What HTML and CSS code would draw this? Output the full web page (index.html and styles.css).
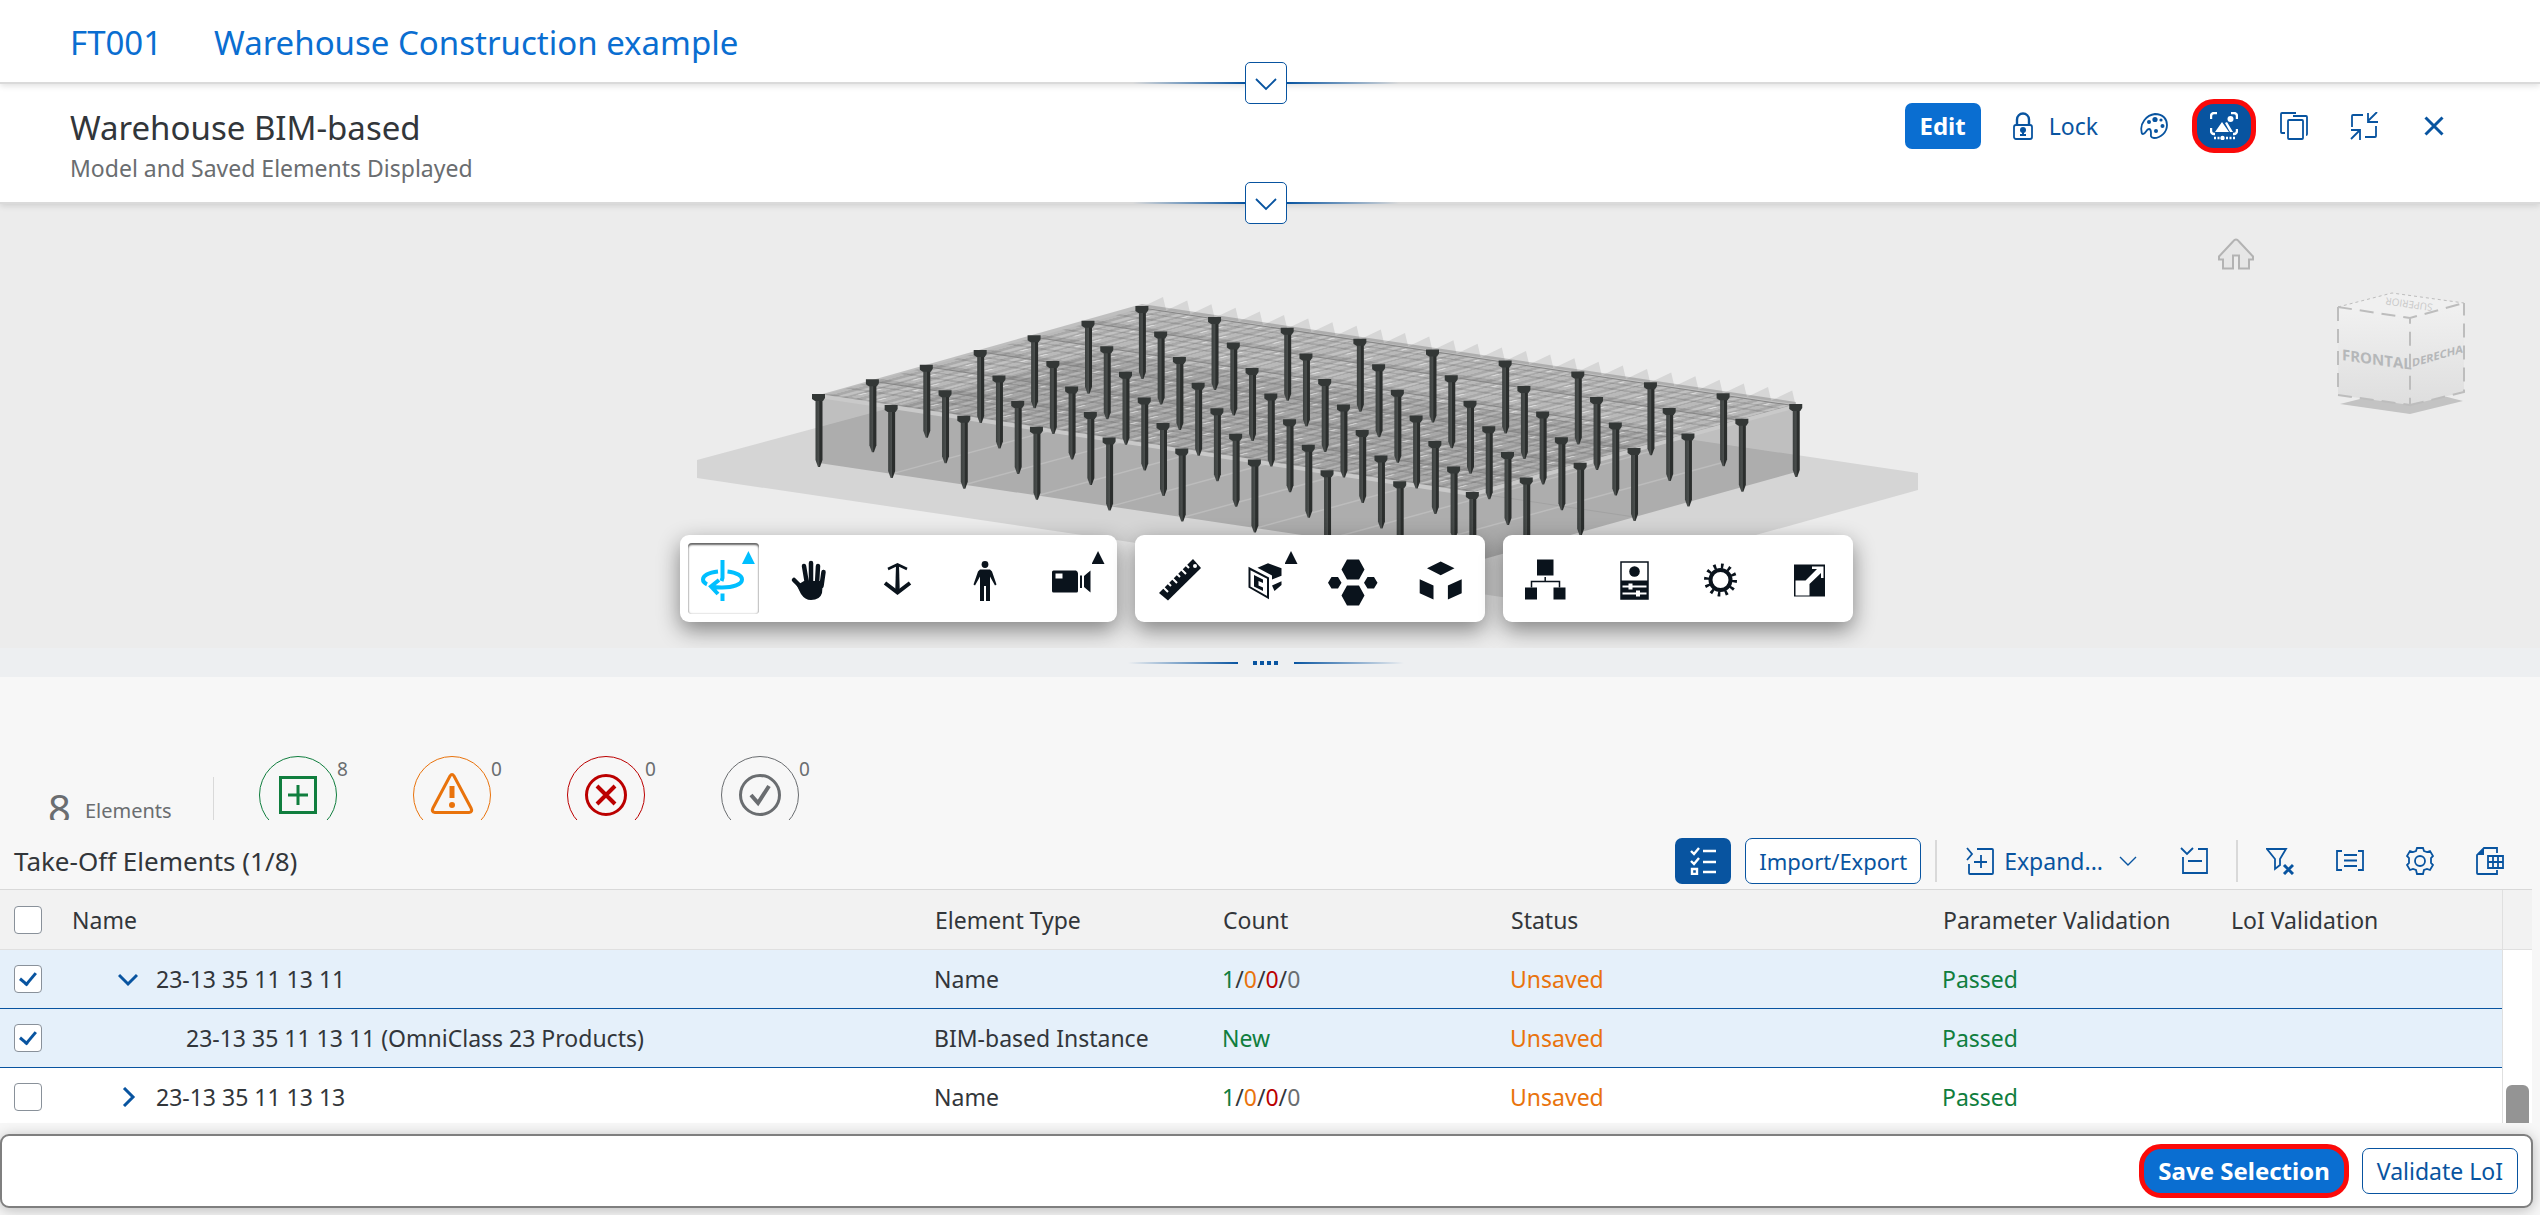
FILE: index.html
```html
<!DOCTYPE html>
<html lang="en">
<head>
<meta charset="utf-8">
<title>Warehouse Construction example</title>
<link rel="stylesheet" href="styles.css">
</head>
<body>
<div class="page">

<header class="project-bar">
  <a class="project-link" href="#project">FT001</a>
  <a class="project-link" href="#project-details">Warehouse Construction example</a>
  <div class="expander">
    <span class="expander-line"></span>
    <button class="expander-button" type="button" aria-label="Expand project header"><svg class="icon-m" viewBox="0 0 28 28"><path class="line" d="M4 10l10 10 10-10"/></svg></button>
    <span class="expander-line expander-line-end"></span>
  </div>
</header>

<section class="model-bar">
  <div class="model-titles">
    <h1 class="model-title">Warehouse BIM-based</h1>
    <p class="model-subtitle">Model and Saved Elements Displayed</p>
  </div>
  <div class="actions">
    <button class="button button-primary" type="button">Edit</button>
    <button class="button button-ghost button-lock" type="button">
      <svg class="icon-lock" viewBox="0 0 20 28"><path class="line thick" d="M4 13V7.500a6 6 0 0 1 12 0V13"/><rect class="line" x="1" y="13" width="18" height="14" rx="2"/><circle class="solid" cx="10" cy="18" r="3"/><path class="solid" d="M9 19h2v3h2v2H7v-2h2z"/></svg>
      Lock</button>
    <button class="button button-icon" type="button" aria-label="Colors"><svg class="icon-m" viewBox="0 0 28 28"><path class="line" d="M1.500 19C0 12 6 3 15 2c8 0 12 5 12 11 0 7-6 13-13 13-4 0-3-3-3-5s0-4-2-4c-3 0-3 5-6 5-1 0-1.500-1-1.500-3z"/><circle class="solid" cx="9" cy="10" r="2"/><circle class="solid" cx="15" cy="7.500" r="2.600"/><circle class="solid" cx="21" cy="8" r="1.600"/><circle class="solid" cx="22.500" cy="14" r="2"/><circle class="solid" cx="16" cy="19" r="2"/></svg></button>
    <button class="button button-icon button-selected marked" type="button" aria-label="Highlight elements"><svg class="icon-m" viewBox="0 0 28 28"><path class="line thick" d="M1 7V4a3 3 0 0 1 3-3h3M21 1h3a3 3 0 0 1 3 3v3M1 16v3a3 3 0 0 0 3 3h1M27 17v2a3 3 0 0 1-3 3h-1"/><path class="solid" d="M5 20l7-10 7 10zM15 11l2-1 6 10h-3z"/><circle class="solid" cx="20.500" cy="7" r="3"/><circle class="solid" cx="12.500" cy="26" r="2.200"/><path class="line thick" stroke-dasharray="2 1.500" d="M4 26h6M16 26h9"/></svg></button>
    <button class="button button-icon" type="button" aria-label="Copy"><svg class="icon-m" viewBox="0 0 28 28"><path class="line" d="M5 21H2a1 1 0 0 1-1-1V2a1 1 0 0 1 1-1h14M13 4h13a1 1 0 0 1 1 1v17a1 1 0 0 1-1 1"/><rect class="line" x="8" y="8" width="15" height="19" rx="1"/></svg></button>
    <button class="button button-icon" type="button" aria-label="Exit full screen"><svg class="icon-m" viewBox="0 0 28 28"><path class="line" d="M2 15V4a1 1 0 0 1 1-1h10M26 14v10a1 1 0 0 1-1 1H15M27 0l-9 9M18 1v9h10M1 27l9-9M1 18h9v10"/></svg></button>
    <button class="button button-icon" type="button" aria-label="Close"><svg class="icon-m" viewBox="0 0 28 28"><path class="line heavy" d="M5.500 5.500l17 17M22.500 5.500l-17 17"/></svg></button>
  </div>
  <div class="expander">
    <span class="expander-line"></span>
    <button class="expander-button" type="button" aria-label="Expand model header"><svg class="icon-m" viewBox="0 0 28 28"><path class="line" d="M4 10l10 10 10-10"/></svg></button>
    <span class="expander-line expander-line-end"></span>
  </div>
</section>

<main class="viewer">
  <svg class="scene" viewBox="592 280 1348 345" role="img" aria-label="Warehouse model">
    <defs>
      <linearGradient id="steel"><stop offset="0" stop-color="#3b3f3e"/><stop offset=".5" stop-color="#4b4f4e"/><stop offset=".6" stop-color="#2b2e2d"/><stop offset="1" stop-color="#2b2e2d"/></linearGradient>
      <g id="column"><path fill="url(#steel)" d="M-3.500 2h7v64l-2.500 7h-2l-2.500-7z"/><path fill="#333736" d="M-7 0h13v4l-2 3h-8l-3-2z"/></g>
      <g id="bay">
        <use href="#column" x="0" y="0"/><use href="#column" x="72.650" y="10.900"/><use href="#column" x="145.300" y="21.800"/><use href="#column" x="217.950" y="32.700"/><use href="#column" x="290.600" y="43.600"/><use href="#column" x="363.250" y="54.500"/><use href="#column" x="435.900" y="65.400"/><use href="#column" x="508.550" y="76.300"/><use href="#column" x="581.200" y="87.200"/><use href="#column" x="653.850" y="98.100"/>
      </g>
      <pattern id="sheet" width="1" height="1" patternUnits="userSpaceOnUse">
        <rect width="1" height="1" fill="#000" fill-opacity=".03"/>
        <path fill="#000" fill-opacity=".09" d="M0 .08h1v.08H0zM0 .26h1v.05H0zM0 .42h1v.08H0zM0 .6h1v.05H0zM0 .76h1v.08H0zM0 .92h1v.04H0z"/>
        <path fill="#fff" fill-opacity=".13" d="M0 .18h1v.06H0zM0 .52h1v.06H0zM0 .86h1v.05H0z"/>
        <path fill="#000" fill-opacity=".1" d="M0 0h.16v1H0zM.5 0h.08v1H.5zM.76 0h.06v1h-.06z"/>
        <path fill="#fff" fill-opacity=".45" d="M.3 .3h.14v.04H.3zM.62 .3h.1v.04h-.1zM.2 .64h.14v.04H.2zM.84 .66h.1v.04h-.1z"/>
      </pattern>
    </defs>
    <path fill="#d5d5d5" d="M697 460L1098 352 1918 473v17L1522 600 697 478z"/>
    <path fill="#d6d6d6" d="M1142 307l21-10 3.200 13.600 21-10 3.200 13.600 21-10 3.200 13.600 21-10 3.200 13.600 21-10 3.200 13.600 21-10 3.200 13.600 21-10 3.200 13.600 21-10 3.200 13.600 21-10 3.200 13.600 21-10 3.200 13.600 21-10 3.200 13.600 21-10 3.200 13.600 21-10 3.200 13.600 21-10 3.200 13.600 21-10 3.200 13.600 21-10 3.200 13.600 21-10 3.200 13.600 21-10 3.200 13.600 21-10 3.200 13.600 21-10 3.200 13.600 21-10 3.200 13.600 21-10 3.200 13.600 21-10 3.200 13.600 21-10 3.200 13.600 21-10 3.200 13.600 21-10 3.200 13.600 21-10 3.200 13.600z"/>
    <path fill-opacity=".19" d="M819 395L1142 304 1796 402v70L1477 561 819 463z"/>
    <g class="floor-lines" transform="matrix(53.900 -14.670 72.650 10.900 819 463)"><path d="M0 1h6M0 2h6M0 3h6M0 4h6M0 5h6M0 6h6M0 7h6M0 8h6"/></g>
    <g class="wall-lines" transform="matrix(53.900 -14.670 72.650 10.900 819 463)"><path d="M3 0v9"/></g>
    <g transform="matrix(53.900 -14.670 72.650 10.900 819 396)"><rect width="6" height="9" fill="url(#sheet)"/><path class="eave" d="M6 9H0V0"/><path class="ridge" d="M6 0v9M5 0v9M4 0v9M3 0v9M2 0v9M1 0v9"/></g>
    <use href="#bay" x="1142.400" y="306"/><use href="#bay" x="1088.500" y="320.700"/><use href="#bay" x="1034.600" y="335.300"/><use href="#bay" x="980.700" y="350"/><use href="#bay" x="926.800" y="364.700"/><use href="#bay" x="872.900" y="379.300"/><use href="#bay" x="819" y="394"/>
  </svg>

  <svg class="view-cube" viewBox="2210 230 260 190" role="img" aria-label="View cube">
    <defs><linearGradient id="face" x1="0" y1="0" x2="0" y2="1"><stop offset="0" stop-color="#f1f1f1"/><stop offset="1" stop-color="#dedede"/></linearGradient></defs>
    <path class="home" d="M2236 239.500q-1.500 0-3 2l-14 15v3h4v9h10v-13h6v13h10v-9h4v-3l-14-15q-1.500-2-3-2z"/>
    <path fill="#c3c3c3" d="M2340 404l70 10 53-13-55-14z"/>
    <path fill="url(#face)" d="M2338 307l72 11v87l-72-10z"/>
    <path fill="url(#face)" d="M2410 318l54-15v89l-54 13z"/>
    <path fill="#f0f0f0" d="M2338 307l54-14 72 10-54 15z"/>
    <path class="cube-edge" d="M2338 307l72 11 54-15M2338 307v88l72 10v-87M2410 405l54-13v-89"/>
    <path class="cube-edge cube-edge-back" d="M2338 307l54-14 72 10"/>
    <text class="cube-text" font-size="15" transform="translate(2342 360) skewY(8)">FRONTAL</text>
    <text class="cube-text" font-size="11" transform="translate(2412 367) skewY(-16)">DERECHA</text>
    <text class="cube-text cube-text-top" font-size="10" transform="translate(2433 304) rotate(188)">SUPERIOR</text>
  </svg>

  <div class="viewer-tools">
    <div class="tool-group">
      <button class="tool tool-active" type="button" aria-label="Orbit"><svg class="icon-l" viewBox="0 0 48 48"><path fill="none" stroke="currentColor" stroke-width="4" d="M19 16.500C9 17.500 4 21 4 24.500c0 2 1 3.500 4 4.800M28.500 16.500C38 17.500 43 21 43 24.500c0 5-9 8-20 8-4 0-8-.4-11-1M20 25l-8 6.500 7 7.500M23.500 5v18l-1 3M23.500 46v-7.500"/></svg><span class="tool-more"></span></button>
      <button class="tool" type="button" aria-label="Pan"><svg class="icon-l" viewBox="0 0 48 48"><path fill="none" stroke="currentColor" stroke-width="4.500" stroke-linecap="round" d="M7 25l9 9M17 11l3 18M24 8v20M31 11l-1 18M36.500 17l-2 14"/><path fill="currentColor" d="M12 29l5-3h19l-1 12q-2 7-11 7-6 0-10-6l-5-10z"/></svg></button>
      <button class="tool" type="button" aria-label="Zoom"><svg class="icon-l" viewBox="0 0 48 48"><path fill="none" stroke="currentColor" stroke-width="2.500" d="M14 14l9.500-4.500L33 14"/><path fill="none" stroke="currentColor" stroke-width="4" d="M11 28l12.500 9.500L36 28"/><path fill="currentColor" d="M22 10h3l.8 28h-4.600z"/></svg></button>
      <button class="tool" type="button" aria-label="First person"><svg class="icon-l" viewBox="0 0 48 48"><circle cx="24" cy="9.500" r="3.400" fill="currentColor"/><path fill="currentColor" d="M19 14.500h10l2 2 4.500 13-1.500 1-5-9v24.500h-4V31h-2v15h-4V21.500l-5 9-1.500-1 4.500-13z"/></svg></button>
      <button class="tool" type="button" aria-label="Camera"><svg class="icon-l" viewBox="0 0 48 48"><path fill="currentColor" fill-rule="evenodd" d="M3 17q0-1.500 1.500-1.500H27q2 1 2 3V36q0 1.500-1.500 1.500h-23Q3 37.500 3 36zM6.500 18.500v5h7v-5zM31 20.500h2v12.500h-2zM35 21l6.500-5.500v22L35 32z"/></svg><span class="tool-more"></span></button>
    </div>
    <div class="tool-group">
      <button class="tool" type="button" aria-label="Measure"><svg class="icon-l" viewBox="0 0 48 48"><path fill="currentColor" d="M5 38L39 4l8 9-33 32.500z"/><path stroke="#fff" stroke-width="2" d="M9 32l5 5M14 28l3 3M18 23l5 5M23 19l3 3M27 14l5 5M32 10l3 3"/><circle cx="41" cy="11" r="2" fill="#fff"/></svg></button>
      <button class="tool" type="button" aria-label="Section"><svg class="icon-l" viewBox="0 0 48 48"><path fill="none" stroke="currentColor" stroke-width="2" d="M7.500 13.500L26 23v19.500L7.500 32z"/><path fill="currentColor" d="M12 20l9 4.500V28l-4.500-2v4.500l4.500 2V36l-9-4.500zM15.500 12.800L26 8.200l13.500 5v7.500L30 24.500v-4zM30 30.500l9.500-4.300v3.800L32.500 36z"/></svg><span class="tool-more"></span></button>
      <button class="tool" type="button" aria-label="Explode"><svg class="icon-l" viewBox="0 0 48 48"><path fill="currentColor" d="M18 4.500h12l5.500 10-5.500 10H18l-5.500-10zM18 30.500h12l5.500 10-5.500 10H18l-5.500-10zM2.500 22H9l3.500 5.800L9 33.500H2.500L-1 27.800zM38.500 22H45l3.500 5.800-3.500 5.700h-6.500L35 27.800z"/></svg></button>
      <button class="tool" type="button" aria-label="Model browser"><svg class="icon-l" viewBox="0 0 48 48"><path fill="currentColor" d="M10 13.200L23.700 6.500 37.500 13.200 23.700 20.200zM2.700 24.200l13.800 6.300v14L2.700 38.200zM44.700 24.200l-13.800 6.300v14l13.800-6.300z"/></svg></button>
    </div>
    <div class="tool-group">
      <button class="tool" type="button" aria-label="Structure"><svg class="icon-l" viewBox="0 0 48 48"><path fill="currentColor" d="M15 4.500h16.500v16H15zM3 32.500h12v12H3zM31.500 32.500h12v12h-12z"/><path fill="none" stroke="currentColor" stroke-width="1.500" d="M23.200 22v4.500M9.500 32.500v-6h28v6"/></svg></button>
      <button class="tool" type="button" aria-label="Properties"><svg class="icon-l" viewBox="0 0 48 48"><path fill="none" stroke="currentColor" stroke-width="1.500" d="M11 7h27v37H11z"/><path fill="currentColor" d="M11 25.500h27V44H11z"/><circle cx="24.500" cy="16.500" r="5.300" fill="currentColor"/><path stroke="#fff" stroke-width="2" d="M12.500 31.500h24M12.500 38.500h24"/><path stroke="#fff" stroke-width="4" d="M20.500 28.500v6M28 35.500v6"/></svg></button>
      <button class="tool" type="button" aria-label="Settings"><svg class="icon-l" viewBox="0 0 48 48"><circle cx="23.500" cy="25" r="10" fill="none" stroke="currentColor" stroke-width="4"/><circle cx="23.500" cy="25" r="14" fill="none" stroke="currentColor" stroke-width="5" stroke-dasharray="2.600 4.730"/></svg></button>
      <button class="tool" type="button" aria-label="Full screen"><svg class="icon-l" viewBox="0 0 48 48"><path fill="currentColor" d="M9 9.500h31v32H9z"/><path fill="#fff" d="M10.500 25.500h10L32 14h-5v-2.500h11.500V23H36v-5L24.500 29v11.500h-14z"/></svg></button>
    </div>
  </div>
</main>

<div class="splitter" role="separator"><span class="splitter-line"></span><span class="splitter-grip"></span><span class="splitter-line splitter-line-end"></span></div>

<section class="summary">
  <div class="summary-total"><span class="summary-number">8</span><span class="summary-label">Elements</span></div>
  <div class="status status-new"><span class="status-ring"><svg class="icon-s" viewBox="0 0 44 44"><path d="M4.500 4.500h35v35h-35zM22 12v20M12 22h20"/></svg></span><span class="status-count">8</span></div>
  <div class="status status-warning"><span class="status-ring"><svg class="icon-s" viewBox="0 0 44 44"><path d="M20 3q2-3 4 0l17 32q2 4-2 4.500H5Q1 39 3 35z"/><path d="M22 13v12" stroke-width="5"/><circle cx="22" cy="32" r="3" fill="currentColor" stroke="none"/></svg></span><span class="status-count">0</span></div>
  <div class="status status-error"><span class="status-ring"><svg class="icon-s" viewBox="0 0 44 44"><circle cx="22" cy="22" r="19.500"/><path stroke-width="4" d="M13 13l18 18M31 13L13 31"/></svg></span><span class="status-count">0</span></div>
  <div class="status status-done"><span class="status-ring"><svg class="icon-s" viewBox="0 0 44 44"><circle cx="22" cy="22" r="19.500"/><path stroke-width="4" d="M13 22l7 8 11-17"/></svg></span><span class="status-count">0</span></div>
</section>

<section class="elements">
  <div class="table-bar">
    <h2 class="table-title">Take-Off Elements (1/8)</h2>
    <div class="actions">
      <button class="button button-icon button-selected" type="button" aria-label="Multi select"><svg class="icon-m" viewBox="0 0 28 28"><path class="line thick" d="M2 4l3 3 5-6M2 14l3 3 5-6M14 4h13M14 15h13M14 25h13M3 22h5v5H3z"/></svg></button>
      <button class="button button-outline button-transfer" type="button">Import/Export</button>
      <span class="bar-divider"></span>
      <button class="button button-ghost button-expand" type="button"><svg class="icon-m" viewBox="0 0 28 28"><path class="line" d="M1 1l5 6-5 6M3 17v9a1 1 0 0 0 1 1h22a1 1 0 0 0 1-1V3a1 1 0 0 0-1-1H11M15 8v13M8 15h13"/></svg>Expand...<svg class="icon-chevron" viewBox="0 0 18 18"><path class="line thin" d="M1 5l8 8 8-8"/></svg></button>
      <button class="button button-icon" type="button" aria-label="Collapse"><svg class="icon-m" viewBox="0 0 28 28"><path class="line" d="M1 1l6 6 6-6M3 10v16h24V2H18M8 14h14"/></svg></button>
      <span class="bar-divider"></span>
      <button class="button button-icon" type="button" aria-label="Clear filter"><svg class="icon-m" viewBox="0 0 28 28"><path class="line" d="M1 2h19l-6 10v6l-5 4V12z"/><path class="line heavy" d="M18 18l9 9M27 18l-9 9"/></svg></button>
      <button class="button button-icon" type="button" aria-label="Group"><svg class="icon-m" viewBox="0 0 28 28"><path class="line" d="M6 4H1v19h5M22 4h5v19h-5M8 8h13M8 13.500h13M8 19h13"/></svg></button>
      <button class="button button-icon" type="button" aria-label="Settings"><svg class="icon-m" viewBox="0 0 28 28"><circle class="line" cx="14" cy="14" r="5"/><path class="line" d="M11 1h6l1 3 3 1 3-1 3 5-2 2v5l2 2-3 5-3-1-3 1-1 4h-6l-1-4-3-1-3 1-3-5 2-2v-5L1 9l3-5 3 1 3-1z"/></svg></button>
      <button class="button button-icon" type="button" aria-label="Export to spreadsheet"><svg class="icon-m" viewBox="0 0 28 28"><path class="line" d="M21 6V1H8L1 8v18a1 1 0 0 0 1 1h19v-4M12 9h15v12H12zM12 15h15M17 9v12M22 9v12"/><path class="solid" d="M8 1v7H1z"/></svg></button>
    </div>
  </div>

  <div class="table-area">
    <table class="table">
      <colgroup><col class="col-check"><col><col class="col-std"><col class="col-std"><col class="col-wide"><col class="col-std"><col class="col-last"></colgroup>
      <thead>
        <tr><th><input class="check" type="checkbox" aria-label="Select all"></th><th>Name</th><th>Element Type</th><th>Count</th><th>Status</th><th>Parameter Validation</th><th>LoI Validation</th></tr>
      </thead>
      <tbody>
        <tr class="selected"><td><input class="check" type="checkbox" aria-label="Select 23-13 35 11 13 11" checked></td>
          <td><span class="node"><button class="node-toggle" type="button" aria-label="Collapse node"><svg class="icon-caret" viewBox="0 0 20 20"><path class="line heavy" d="M1 6l9 9 9-9"/></svg></button>23-13 35 11 13 11</span></td>
          <td>Name</td><td><span class="new">1</span>/<span class="warn">0</span>/<span class="error">0</span>/<span class="muted">0</span></td><td class="warn">Unsaved</td><td class="new">Passed</td><td></td></tr>
        <tr class="selected"><td><input class="check" type="checkbox" aria-label="Select OmniClass 23 Products" checked></td>
          <td><span class="node node-child">23-13 35 11 13 11 (OmniClass 23 Products)</span></td>
          <td>BIM-based Instance</td><td class="new">New</td><td class="warn">Unsaved</td><td class="new">Passed</td><td></td></tr>
        <tr><td><input class="check" type="checkbox" aria-label="Select 23-13 35 11 13 13"></td>
          <td><span class="node"><button class="node-toggle" type="button" aria-label="Expand node"><svg class="icon-caret" viewBox="0 0 20 20"><path class="line heavy" d="M6 1l9 9-9 9"/></svg></button>23-13 35 11 13 13</span></td>
          <td>Name</td><td><span class="new">1</span>/<span class="warn">0</span>/<span class="error">0</span>/<span class="muted">0</span></td><td class="warn">Unsaved</td><td class="new">Passed</td><td></td></tr>
      </tbody>
    </table>
    <div class="scrollbar"><div class="scrollbar-head"></div><div class="scrollbar-track"><div class="scrollbar-thumb"></div></div></div>
  </div>
</section>

<footer class="footer-bar">
  <button class="button button-primary marked" type="button">Save Selection</button>
  <button class="button button-outline" type="button">Validate LoI</button>
</footer>

</div>
</body>
</html>
```
FILE: styles.css
```css
* { box-sizing: border-box; }

body {
  margin: 0;
  background: #f7f7f7;
  color: #32363a;
  font: 23px/32px "Noto Sans", "Open Sans", sans-serif;
}

h1, h2, p { margin: 0; font-weight: 400; }

button { font: inherit; cursor: pointer; }

.page {
  min-height: 100vh;
  display: flex;
  flex-direction: column;
  overflow: hidden;
}

/* Header bars */
.project-bar, .model-bar {
  position: relative;
  display: flex;
  background: #fff;
  border-bottom: 2px solid #dadada;
  box-shadow: 0 2px 6px rgba(0, 0, 0, .12);
}

.project-bar {
  z-index: 3;
  gap: 52px;
  align-items: center;
  height: 84px;
  padding: 4px 70px 0;
}

.project-link {
  color: #0a6ed1;
  font-size: 33px;
  line-height: 40px;
  text-decoration: none;
}

.model-bar {
  z-index: 2;
  justify-content: space-between;
  align-items: flex-start;
  height: 120px;
  padding: 19px 78px 0 70px;
}

.model-title { font-size: 33px; line-height: 49px; }
.model-subtitle { color: #6a6d70; }

.expander {
  position: absolute;
  left: 0;
  right: 8px;
  bottom: -22px;
  height: 42px;
  display: flex;
  justify-content: center;
  align-items: center;
  pointer-events: none;
}

.expander-line {
  width: 112px;
  height: 2px;
  background: linear-gradient(to right, transparent, #0854a0);
}

.expander-line-end { background: linear-gradient(to left, transparent, #0854a0); }

.expander-button {
  width: 42px;
  height: 42px;
  padding: 0;
  display: grid;
  place-items: center;
  color: #0854a0;
  background: #fff;
  border: 1px solid #0854a0;
  border-radius: 5px;
  pointer-events: auto;
}

/* Buttons and icons */
.actions { display: flex; align-items: center; gap: 14px; }

.button {
  height: 46px;
  padding: 0 14px;
  display: flex;
  align-items: center;
  justify-content: center;
  border: 1px solid transparent;
  border-radius: 7px;
  background: transparent;
  color: #0854a0;
  white-space: nowrap;
}

.button-primary { background: #0a6ed1; color: #fff; font-size: 24px; font-weight: 700; }
.button-outline { background: #fff; border-color: #0854a0; }
.button-transfer { padding: 0 13px; font-size: 22px; }
.button-icon { width: 56px; padding: 0; }
.button-selected { background: #0854a0; color: #fff; }
.button-lock { gap: 16px; padding: 0 13px 0 17px; }
.button-expand { gap: 10px; }
.marked { outline: 5px solid #fb0a0a; outline-offset: -1px; border-radius: 18px; }

.icon-m { width: 28px; height: 28px; }
.icon-lock { width: 20px; height: 28px; }
.icon-chevron { width: 18px; height: 18px; margin-left: 6px; }
.icon-caret { width: 20px; height: 20px; }
.icon-l { width: 48px; height: 48px; overflow: visible; }
.icon-s { width: 44px; height: 44px; fill: none; stroke: currentColor; stroke-width: 3; }

.line { fill: none; stroke: currentColor; stroke-width: 1.800; }
.thin { stroke-width: 1.400; }
.thick { stroke-width: 2.400; }
.heavy { stroke-width: 3; }
.solid { fill: currentColor; }

/* 3D viewer */
.viewer {
  position: relative;
  height: 444px;
  padding: 76px 8px 0 0;
  background: #ececec;
  overflow: hidden;
}

.scene { display: block; width: 1348px; height: 345px; margin: 0 auto; }

.floor-lines path, .wall-lines path, .eave, .ridge { fill: none; vector-effect: non-scaling-stroke; }
.floor-lines path { stroke: #bcbcbc; stroke-width: 1.500; }
.wall-lines path { stroke: #a2a2a2; stroke-width: 1; }
.eave { stroke: #c9c9c9; stroke-width: 4; }
.ridge { stroke: #858585; stroke-width: 1; }

.view-cube { position: absolute; top: 26px; right: 70px; width: 260px; height: 190px; }
.home { fill: #e6e6e6; stroke: #b3b3b3; stroke-width: 2; }
.cube-edge { fill: none; stroke: #bdbdbd; stroke-width: 2; stroke-dasharray: 14 8; }
.cube-edge-back { stroke-width: 1; stroke-dasharray: 3 3; }
.cube-text { fill: #b5b7b9; font-weight: 700; font-family: "Open Sans", sans-serif; }
.cube-text-top { fill: #c9c9c9; font-weight: 400; }

.viewer-tools {
  position: absolute;
  left: 0;
  right: 8px;
  bottom: 26px;
  display: flex;
  justify-content: center;
  gap: 18px;
}

.tool-group {
  display: flex;
  width: 350px;
  height: 87px;
  background: #fff;
  border-radius: 9px;
  box-shadow: 0 8px 22px rgba(0, 0, 0, .45);
}

.tool-group:first-child { width: 437px; }

.tool {
  position: relative;
  flex: 1;
  padding: 0;
  display: grid;
  place-items: center;
  border: 0;
  background: transparent;
  color: #0a131c;
}

.tool-active { color: #00bfff; }

.tool-active::before {
  content: "";
  position: absolute;
  inset: 8px;
  border-radius: 4px;
  box-shadow: inset 0 2px 2px #666, inset 0 0 2px #aaa;
}

.tool-more {
  position: absolute;
  top: 16px;
  right: 12px;
  width: 13px;
  height: 13px;
  background: currentColor;
  clip-path: polygon(50% 0, 100% 100%, 0 100%);
}

.splitter {
  display: flex;
  justify-content: center;
  align-items: center;
  gap: 15px;
  height: 29px;
  padding-right: 8px;
  background: #edeff1;
}

.splitter-line { width: 110px; height: 2px; background: linear-gradient(to right, transparent, #0854a0); }
.splitter-line-end { background: linear-gradient(to left, transparent, #0854a0); }
.splitter-grip { width: 26px; height: 4px; background: repeating-linear-gradient(to right, #0854a0 0 4px, transparent 4px 7px); }

/* Status summary */
.summary {
  display: flex;
  height: 143px;
  padding: 79px 0 0 48px;
  overflow: hidden;
  color: #6a6d70;
}

.summary-total {
  display: flex;
  align-items: center;
  gap: 14px;
  width: 166px;
  height: 64px;
  margin: 21px 45px 0 0;
  border-right: 1px solid #d9d9d9;
}

.summary-number { font-size: 40px; line-height: 60px; }
.summary-label { padding-top: 4px; font-size: 20px; line-height: 28px; }

.status { display: flex; width: 154px; }
.status-ring {
  flex: none;
  width: 78px;
  height: 78px;
  display: grid;
  place-items: center;
  border: 1px solid currentColor;
  border-radius: 50%;
}

.status-count { color: #6a6d70; font-size: 19px; line-height: 26px; }
.status-new, .new { color: #107e3e; }
.status-warning, .warn { color: #e9730c; }
.status-error, .error { color: #b00; }
.status-done, .muted { color: #6a6d70; }

/* Elements table */
.elements { padding-right: 8px; }

.table-bar {
  display: flex;
  justify-content: space-between;
  align-items: center;
  height: 69px;
  padding: 12px 14px 0;
}

.table-title { font-size: 26px; }
.bar-divider { width: 2px; height: 42px; background: #d9d9d9; }

.table-area {
  display: flex;
  height: 234px;
  overflow: hidden;
  border-top: 1px solid #d9d9d9;
  background: #fff;
}

.table {
  flex: 1;
  width: 100%;
  table-layout: fixed;
  border-collapse: separate;
  border-spacing: 0;
}

.col-check { width: 58px; }
.col-std { width: 288px; }
.col-wide { width: 432px; }
.col-last { width: 285px; }

.table th, .table td {
  height: 60px;
  padding: 0 13px;
  text-align: left;
  font-weight: 400;
  white-space: nowrap;
  border-bottom: 1px solid #e0e0e0;
}

.table th { padding: 0 14px; background: #f2f2f2; }
.table tbody td { height: 59px; }
.table tbody td:first-child { padding: 0 14px; }
.table .selected td { background: #e5f0fa; border-color: #0854a0; }

.check {
  appearance: none;
  display: grid;
  place-items: center;
  width: 28px;
  height: 28px;
  margin: 0;
  background: #fff;
  border: 1px solid #89919a;
  border-radius: 4px;
}

.check:checked::after {
  content: "";
  width: 13px;
  height: 7px;
  margin-bottom: 4px;
  border: solid #0854a0;
  border-width: 0 0 3px 3px;
  transform: rotate(-50deg);
}

.node { display: flex; align-items: center; padding-left: 45px; }
.node-child { padding-left: 115px; }
.node-toggle {
  display: grid;
  place-items: center;
  width: 24px;
  height: 24px;
  margin-right: 16px;
  padding: 0;
  border: 0;
  background: transparent;
  color: #0854a0;
}

.scrollbar {
  width: 30px;
  display: flex;
  flex-direction: column;
  border-left: 1px solid #e0e0e0;
}

.scrollbar-head { height: 60px; background: #f2f2f2; border-bottom: 1px solid #e0e0e0; }
.scrollbar-track { flex: 1; display: flex; align-items: flex-end; padding: 0 3px; }
.scrollbar-thumb { width: 100%; height: 38px; background: #949494; border-radius: 6px 6px 0 0; }

/* Footer */
.footer-bar {
  display: flex;
  justify-content: flex-end;
  align-items: center;
  gap: 17px;
  height: 74px;
  margin: 11px 7px 8px 0;
  padding: 0 13px;
  background: #fff;
  border: 2px solid #7f7f7f;
  border-radius: 9px;
  box-shadow: 0 2px 14px rgba(0, 0, 0, .25);
}
```
